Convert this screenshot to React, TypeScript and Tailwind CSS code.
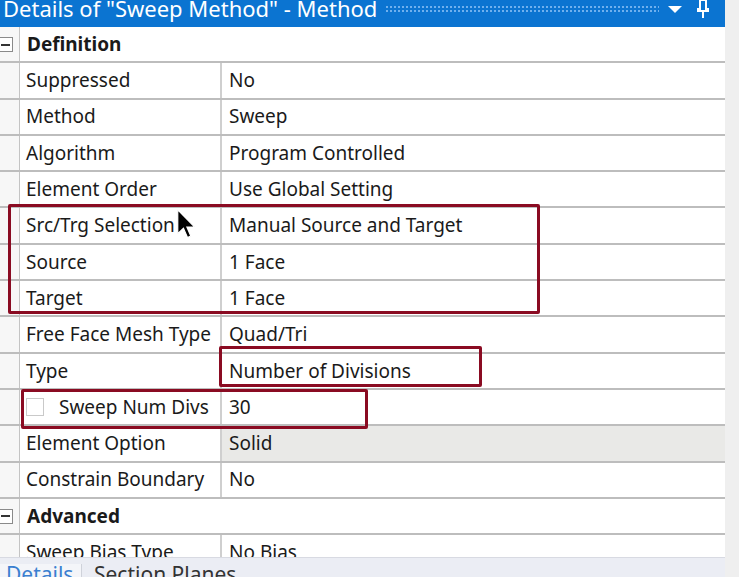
import { Fragment } from "react";

type Row =
  | { kind: "group"; label: string }
  | { kind: "prop"; label: string; value: string; check?: boolean; grey?: boolean };

const rows: Row[] = [
  { kind: "group", label: "Definition" },
  { kind: "prop", label: "Suppressed", value: "No" },
  { kind: "prop", label: "Method", value: "Sweep" },
  { kind: "prop", label: "Algorithm", value: "Program Controlled" },
  { kind: "prop", label: "Element Order", value: "Use Global Setting" },
  { kind: "prop", label: "Src/Trg Selection", value: "Manual Source and Target" },
  { kind: "prop", label: "Source", value: "1 Face" },
  { kind: "prop", label: "Target", value: "1 Face" },
  { kind: "prop", label: "Free Face Mesh Type", value: "Quad/Tri" },
  { kind: "prop", label: "Type", value: "Number of Divisions" },
  { kind: "prop", label: "Sweep Num Divs", value: "30", check: true },
  { kind: "prop", label: "Element Option", value: "Solid", grey: true },
  { kind: "prop", label: "Constrain Boundary", value: "No" },
  { kind: "group", label: "Advanced" },
  { kind: "prop", label: "Sweep Bias Type", value: "No Bias" },
];

function Cursor() {
  return (
    <svg
      className="absolute left-[177px] top-[209px]"
      width="18"
      height="30"
      viewBox="0 0 12 20"
    >
      <path
        d="M0.5 0.5 L0.5 16.5 L4.3 12.8 L7 19 L9.2 18 L6.6 12 L11.8 12 Z"
        fill="#000"
        stroke="#fff"
        strokeWidth="0.8"
      />
    </svg>
  );
}

export default function App() {
  return (
    <div className="relative w-[739px] h-[577px] overflow-hidden flex bg-[#f0f0f0] font-['Noto_Sans',sans-serif] text-[#1a1a1a]">
      <div className="w-[725px] flex flex-col">
        {/* title bar */}
        <div className="h-[27px] shrink-0 bg-[#0b74d1] flex items-center overflow-hidden">
          <span className="pl-[3px] text-white text-[22px] leading-[22px] -translate-y-[6px] whitespace-nowrap">
            Details of "Sweep Method" - Method
          </span>
          <div className="ml-[8px] w-[274px] h-[9px] -translate-y-[4px] bg-[radial-gradient(circle,#6fb0ee_0.9px,transparent_1.2px)] bg-[length:4px_4px]" />
          <svg className="ml-[9px] -translate-y-[4px]" width="14" height="8" viewBox="0 0 14 8">
            <path d="M0 0 H14 L7 7 Z" fill="#fff" />
          </svg>
          <svg className="ml-[14px] -translate-y-[5px]" width="14" height="20" viewBox="0 0 14 20">
            <path d="M4 1 V10 H2 V12 H12 V10 H10 V1 Z" fill="none" stroke="#fff" strokeWidth="2" />
            <path d="M7 12 V19" stroke="#fff" strokeWidth="2" />
          </svg>
        </div>

        {/* property grid */}
        <div className="flex-1 overflow-hidden bg-white">
          {rows.map((r, i) =>
            r.kind === "group" ? (
              <div key={i} className="h-[36.3px] flex border-b-2 border-[#bdbdbd]">
                <div className="w-[20px] relative bg-[#f7f7f7] border-r border-[#c4c4c4]">
                  <div className="absolute -left-[2px] top-[10px] w-[15px] h-[15px] border border-[#8a8a8a] bg-white flex items-center justify-center">
                    <div className="w-[9px] h-[2px] bg-[#333]" />
                  </div>
                </div>
                <div className="flex-1 flex items-center pl-[7px] font-bold text-[19px]">
                  {r.label}
                </div>
              </div>
            ) : (
              <div key={i} className="h-[36.3px] flex border-b-2 border-[#bdbdbd] text-[19px]">
                <div className="w-[20px] bg-[#f7f7f7] border-r border-[#c4c4c4]" />
                <div className="w-[202px] flex items-center pl-[6px] border-r-2 border-[#cfcfcf] whitespace-nowrap overflow-hidden">
                  {r.check ? (
                    <Fragment>
                      <span className="w-[18px] h-[18px] border border-[#c9c9c9] bg-white mr-[15px] shrink-0" />
                      {r.label}
                    </Fragment>
                  ) : (
                    r.label
                  )}
                </div>
                <div
                  className={
                    r.grey
                      ? "flex-1 flex items-center pl-[7px] bg-[#e9e9e7] whitespace-nowrap"
                      : "flex-1 flex items-center pl-[7px] whitespace-nowrap"
                  }
                >
                  {r.value}
                </div>
              </div>
            ),
          )}
        </div>

        {/* bottom tabs */}
        <div className="h-[20px] shrink-0 flex bg-[#ebedf4] border-t border-[#d8dae2] overflow-hidden">
          <div className="w-[82px] bg-[#f4f5f9] border-r border-[#cfd2da] pl-[6px] text-[#3a7fd0] text-[21px] leading-[21px] translate-y-[6px]">
            Details
          </div>
          <div className="pl-[12px] text-[#333] text-[21px] leading-[21px] translate-y-[6px] whitespace-nowrap">
            Section Planes
          </div>
        </div>
      </div>
      <div className="flex-1 bg-[#efefef]" />

      {/* annotation boxes */}
      <div className="absolute left-[8px] top-[204px] w-[532px] h-[110px] border-[3px] border-[#8a0b22] rounded-[2px]" />
      <div className="absolute left-[219px] top-[346px] w-[263px] h-[41px] border-[3px] border-[#8a0b22] rounded-[2px]" />
      <div className="absolute left-[21px] top-[389px] w-[347px] h-[40px] border-[3px] border-[#8a0b22] rounded-[2px]" />

      <Cursor />
    </div>
  );
}
